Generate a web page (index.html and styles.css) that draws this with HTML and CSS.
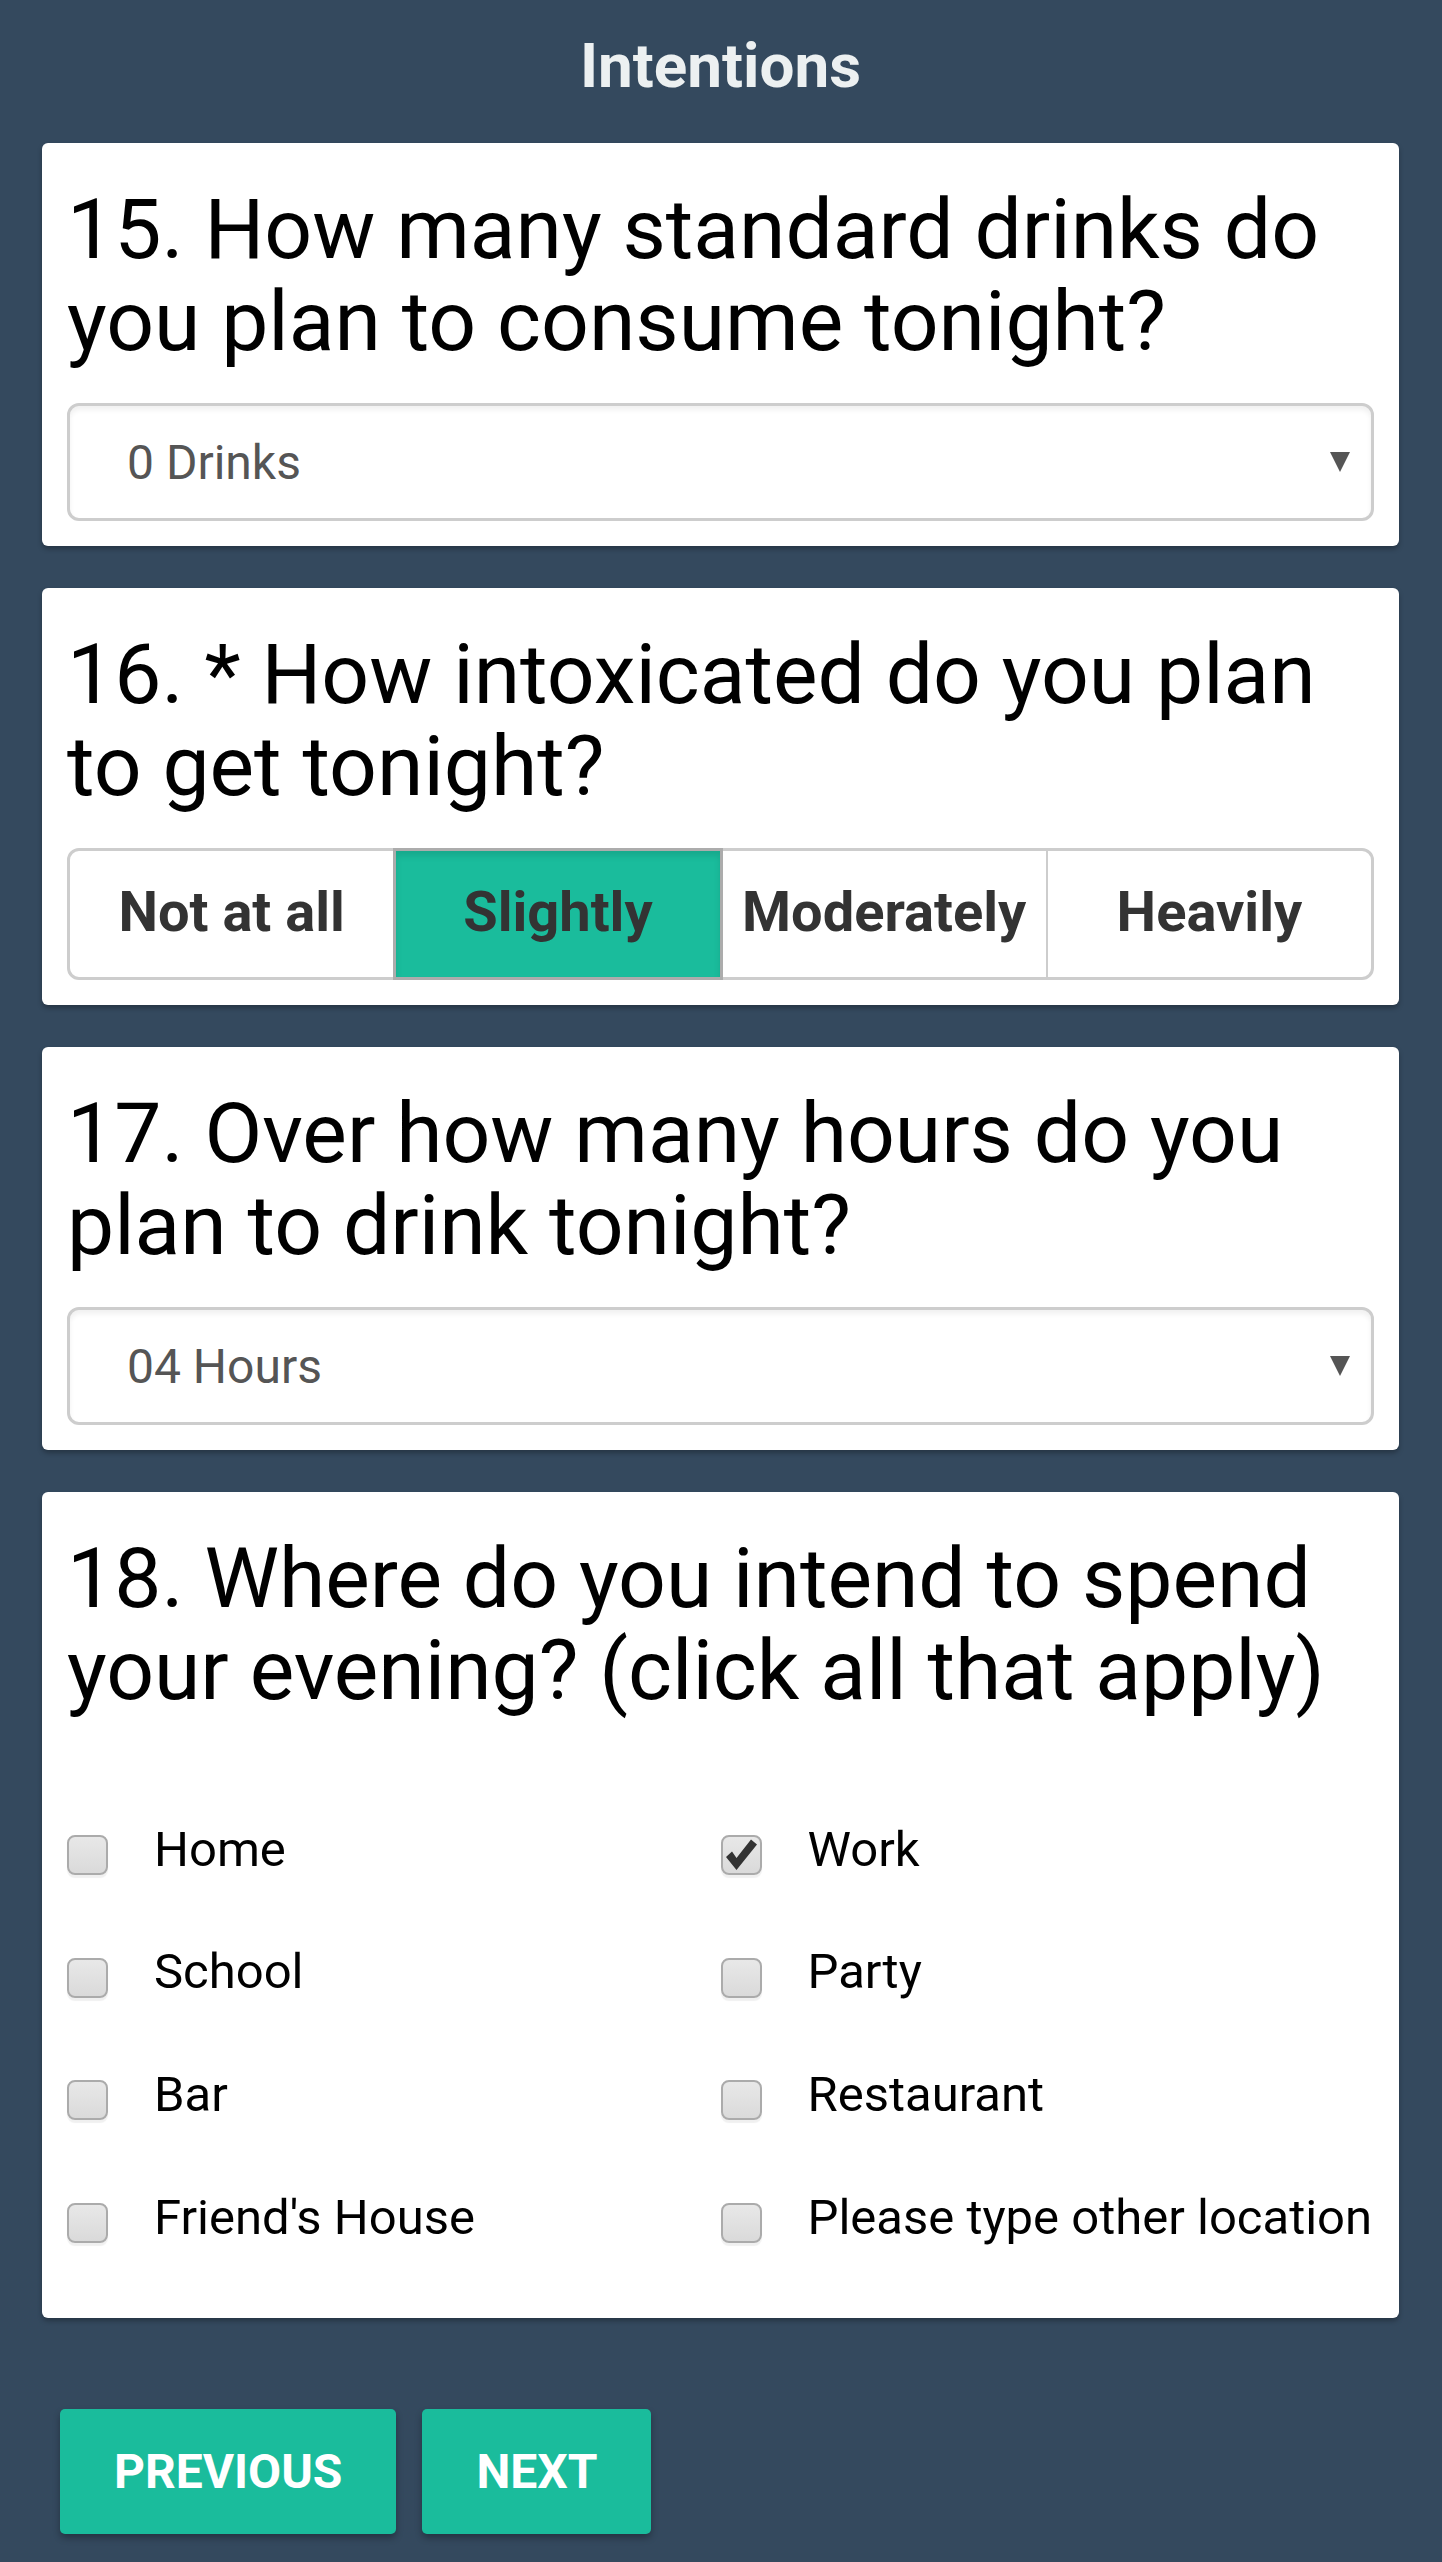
FILE: index.html
```html
<!DOCTYPE html>
<html lang="en">
<head>
<meta charset="utf-8">
<title>Intentions</title>
<link rel="stylesheet" href="styles.css">
</head>
<body>
<div class="page">
  <h1 class="title">Intentions</h1>

  <section class="card">
    <h2 class="question">15. How many standard drinks do you plan to consume tonight?</h2>
    <div class="select">
      <span class="select-value">0 Drinks</span>
      <span class="select-arrow"></span>
    </div>
  </section>

  <section class="card">
    <h2 class="question">16. * How intoxicated do you plan to get tonight?</h2>
    <div class="segmented">
      <div class="seg">Not at all</div>
      <div class="seg seg-selected">Slightly</div>
      <div class="seg seg-after-selected">Moderately</div>
      <div class="seg">Heavily</div>
    </div>
  </section>

  <section class="card">
    <h2 class="question">17. Over how many hours do you plan to drink tonight?</h2>
    <div class="select">
      <span class="select-value">04 Hours</span>
      <span class="select-arrow"></span>
    </div>
  </section>

  <section class="card">
    <h2 class="question">18. Where do you intend to spend your evening? (click all that apply)</h2>
    <div class="checklist">
      <div class="check-item"><span class="checkbox"></span><span class="check-label">Home</span></div>
      <div class="check-item"><span class="checkbox checkbox-checked"><svg viewBox="0 0 36 36" width="36" height="36"><path d="M3 20 L9 14.5 L13.5 21 L28 2.5 L34 7.5 L13.5 33 Z" fill="#333"/></svg></span><span class="check-label">Work</span></div>
      <div class="check-item"><span class="checkbox"></span><span class="check-label">School</span></div>
      <div class="check-item"><span class="checkbox"></span><span class="check-label">Party</span></div>
      <div class="check-item"><span class="checkbox"></span><span class="check-label">Bar</span></div>
      <div class="check-item"><span class="checkbox"></span><span class="check-label">Restaurant</span></div>
      <div class="check-item"><span class="checkbox"></span><span class="check-label">Friend's House</span></div>
      <div class="check-item"><span class="checkbox"></span><span class="check-label">Please type other location</span></div>
    </div>
  </section>

  <div class="nav">
    <button class="nav-btn" type="button">Previous</button>
    <button class="nav-btn" type="button">Next</button>
  </div>
</div>
</body>
</html>
```
FILE: styles.css
```css
* {
  box-sizing: border-box;
}

html, body {
  margin: 0;
  padding: 0;
}

body {
  background: #34495e;
  font-family: Roboto, "Liberation Sans", Arial, sans-serif;
  color: #000;
}

.page {
  padding: 0 43px 29px 42px;
}

.title {
  margin: 0 0 41px;
  padding-top: 30px;
  font-size: 62px;
  line-height: 72px;
  font-weight: 700;
  color: #ecf0f1;
  text-align: center;
}

.card {
  background: #fff;
  border-radius: 6px;
  padding: 41px 25px 25px;
  box-shadow: 0 3px 5px rgba(0, 0, 0, 0.28);
}

.card + .card {
  margin-top: 42px;
}

.question {
  margin: 0 0 35px;
  font-size: 84px;
  line-height: 92px;
  font-weight: 400;
  color: #000;
}

/* select-like field */
.select {
  display: flex;
  align-items: center;
  height: 118px;
  border: 3px solid #cdcdcd;
  border-radius: 12px;
  padding-left: 57px;
  padding-right: 21px;
  box-shadow: inset 0 4px 5px rgba(0, 0, 0, 0.06);
  background: #fff;
}

.select-value {
  font-size: 48px;
  color: #555;
}

.select-arrow {
  margin-left: auto;
  width: 0;
  height: 0;
  border-left: 10.5px solid transparent;
  border-right: 10.5px solid transparent;
  border-top: 20px solid #555;
}

/* segmented buttons */
.segmented {
  display: flex;
  height: 132px;
  border: 3px solid #cdcdcd;
  border-radius: 12px;
  background: #fff;
}

.seg {
  flex: 1 1 0;
  display: flex;
  align-items: center;
  justify-content: center;
  padding-bottom: 4px;
  font-size: 56px;
  font-weight: 700;
  color: #333;
  white-space: nowrap;
}

.seg + .seg {
  border-left: 2px solid #cdcdcd;
}

.seg:first-child {
  border-radius: 9px 0 0 9px;
}

.seg:last-child {
  border-radius: 0 9px 9px 0;
}

.seg.seg-selected {
  margin: -3px 0;
  border: 3px solid #acacac;
  background: #1abc9c;
  box-shadow: inset 0 5px 6px rgba(0, 0, 0, 0.1);
}

.seg.seg-after-selected {
  border-left: none;
}

/* checkboxes */
.checklist {
  display: grid;
  grid-template-columns: 1fr 1fr;
  row-gap: 66.7px;
  padding-top: 69.5px;
  padding-bottom: 47.5px;
}

.check-item {
  display: flex;
  align-items: flex-start;
  line-height: 56px;
}

.checkbox {
  flex: none;
  width: 41px;
  height: 40px;
  margin-top: 13.5px;
  margin-right: 46px;
  border: 2.5px solid #ababab;
  border-radius: 8px;
  background: linear-gradient(#e8e8e8, #dadada);
  box-shadow: 0 3px 1px rgba(0, 0, 0, 0.06);
  display: flex;
  align-items: center;
  justify-content: center;
}

.checkbox svg {
  display: block;
}

.check-label {
  font-size: 49px;
  color: #000;
  white-space: nowrap;
}

/* navigation */
.nav {
  display: flex;
  gap: 26px;
  margin-top: 91px;
  padding-left: 18px;
}

.nav-btn {
  border: none;
  margin: 0;
  padding: 34px 54px;
  background: #1abc9c;
  color: #fff;
  font-family: Roboto, "Liberation Sans", Arial, sans-serif;
  font-size: 48px;
  line-height: 57px;
  font-weight: 700;
  text-transform: uppercase;
  border-radius: 5px;
  box-shadow: 0 4px 7px rgba(0, 0, 0, 0.3);
}
```
